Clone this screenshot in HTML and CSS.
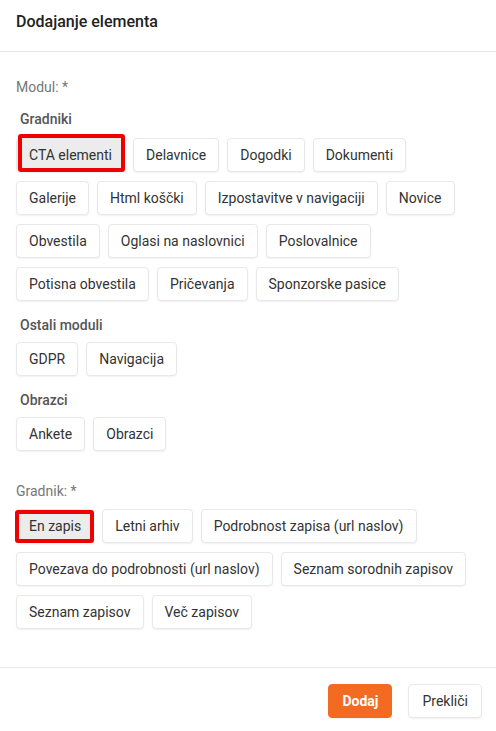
FILE: index.html
```html
<!DOCTYPE html>
<html lang="sl">
<head>
    <meta charset="UTF-8">
    <meta name="viewport" content="width=device-width, initial-scale=1.0">
    <title>Dodajanje elementa</title>
    <link rel="stylesheet" href="styles.css">
</head>
<body>
<div class="modal">
    <header class="modal-header">
        <h2>Dodajanje elementa</h2>
    </header>

    <div class="modal-body">
        <!-- Modul -->
        <div class="field-label">Modul: *</div>

        <div class="group-label">Gradniki</div>
        <div class="chips">
            <button class="chip selected">CTA elementi</button>
            <button class="chip">Delavnice</button>
            <button class="chip">Dogodki</button>
            <button class="chip">Dokumenti</button>
            <button class="chip">Galerije</button>
            <button class="chip">Html koščki</button>
            <button class="chip">Izpostavitve v navigaciji</button>
            <button class="chip">Novice</button>
            <button class="chip">Obvestila</button>
            <button class="chip">Oglasi na naslovnici</button>
            <button class="chip">Poslovalnice</button>
            <button class="chip">Potisna obvestila</button>
            <button class="chip">Pričevanja</button>
            <button class="chip">Sponzorske pasice</button>
        </div>

        <div class="group-label">Ostali moduli</div>
        <div class="chips">
            <button class="chip">GDPR</button>
            <button class="chip">Navigacija</button>
        </div>

        <div class="group-label">Obrazci</div>
        <div class="chips">
            <button class="chip">Ankete</button>
            <button class="chip">Obrazci</button>
        </div>

        <!-- Gradnik -->
        <div class="field-label second">Gradnik: *</div>
        <div class="chips">
            <button class="chip selected alt">En zapis</button>
            <button class="chip">Letni arhiv</button>
            <button class="chip">Podrobnost zapisa (url naslov)</button>
            <button class="chip">Povezava do podrobnosti (url naslov)</button>
            <button class="chip">Seznam sorodnih zapisov</button>
            <button class="chip">Seznam zapisov</button>
            <button class="chip">Več zapisov</button>
        </div>
    </div>

    <footer class="modal-footer">
        <button class="btn btn-primary">Dodaj</button>
        <button class="btn">Prekliči</button>
    </footer>
</div>
</body>
</html>
```

FILE: styles.css
```css
* {
    box-sizing: border-box;
    font-family: Roboto, "Liberation Sans", Arial, sans-serif;
}
body {
    margin: 0;
    padding: 0;
    background-color: #fff;
    color: #333;
}
.modal {
    width: 496px;
    min-height: 731px;
    display: flex;
    flex-direction: column;
}
.modal-header {
    padding: 12px 16px 19px;
    border-bottom: 1px solid #e6e6e6;
}
.modal-header h2 {
    margin: 0;
    font-size: 16px;
    line-height: 20px;
    font-weight: 500;
    color: #222;
}
.modal-body {
    padding: 25px 16px 0;
    flex: 1;
}
.field-label {
    font-size: 14px;
    line-height: 20px;
    color: #777;
}
.field-label.second {
    margin-top: 30px;
}
.group-label {
    margin: 12px 0 9px 4px;
    font-size: 14px;
    line-height: 20px;
    font-weight: 500;
    color: #555;
}
.chips + .group-label {
    margin-top: 14px;
    margin-bottom: 7px;
}
.field-label + .chips {
    margin-top: 8px;
}
.chips {
    display: flex;
    flex-wrap: wrap;
    gap: 9px 8px;
}
.chip {
    position: relative;
    padding: 6px 12px;
    font-size: 14px;
    line-height: 20px;
    color: #333;
    background: #fff;
    border: 1px solid #e8e8e8;
    border-radius: 4px;
    box-shadow: 0 1px 2px rgba(0, 0, 0, 0.06);
    cursor: pointer;
}
.chip.selected {
    background: #ececec;
}
/* red marker drawn over the chosen item */
.chip.selected::after {
    content: "";
    position: absolute;
    top: -5px;
    bottom: -1px;
    left: 1px;
    right: -1px;
    border: 4px solid #ee0000;
    border-radius: 3px;
}
.chip.selected.alt::after {
    top: 0;
    left: -2px;
    right: -1px;
}
.modal-footer {
    margin-top: 37px;
    padding: 16px 14px 13px;
    border-top: 1px solid #e8e8e8;
    display: flex;
    justify-content: flex-end;
    gap: 16px;
}
.btn {
    padding: 6px 13px;
    font-size: 14px;
    line-height: 20px;
    color: #333;
    background: #fff;
    border: 1px solid #e8e8e8;
    border-radius: 4px;
    box-shadow: 0 1px 2px rgba(0, 0, 0, 0.06);
    cursor: pointer;
}
.btn-primary {
    background: #f26b21;
    border-color: #f26b21;
    color: #fff;
    font-weight: 700;
}
```
